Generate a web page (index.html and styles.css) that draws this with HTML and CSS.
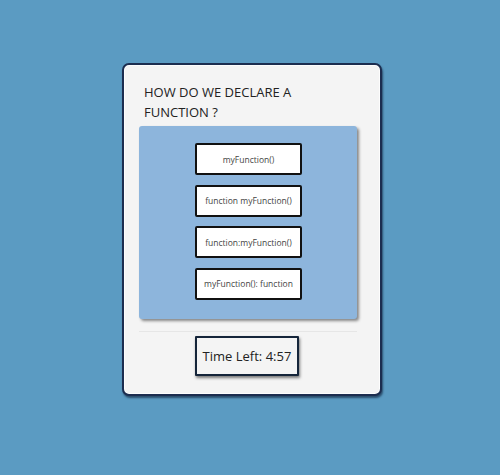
FILE: index.html
```html
<!DOCTYPE html>
<html>
<head>
<meta charset="utf-8">
<link rel="stylesheet" href="styles.css">
</head>
<body>
<div class="quiz">
  <h2 class="question">HOW DO WE DECLARE A FUNCTION ?</h2>
  <div class="answers">
    <button class="answer">myFunction()</button>
    <button class="answer">function myFunction()</button>
    <button class="answer">function:myFunction()</button>
    <button class="answer">myFunction(): function</button>
  </div>
  <hr class="divider">
  <div class="timer">Time Left: 4:57</div>
</div>
</body>
</html>
```
FILE: styles.css
```css
html, body {
  margin: 0;
  height: 100%;
}
body {
  background: #5b9bc2;
  font-family: "Open Sans", "Noto Sans", sans-serif;
  padding-top: 63px;
  box-sizing: border-box;
}
.quiz {
  width: 260px;
  height: 333px;
  box-sizing: border-box;
  margin-left: 122px;
  background: #f4f4f4;
  border: 2px solid #1c2d4f;
  border-radius: 7px;
  box-shadow: inset 0 0 0 1px #fdfdfd, 1px 2px 2px rgba(10, 25, 50, 0.6);
  padding: 17px 23px 0 15px;
  display: flex;
  flex-direction: column;
  align-items: stretch;
}
.question {
  margin: 0 0 4px 5px;
  font-size: 13px;
  line-height: 20px;
  font-weight: 400;
  color: #222;
  width: 190px;
}
.answers {
  background: #8db5dc;
  border-radius: 3px;
  box-shadow: 2px 2px 3px rgba(0, 0, 0, 0.45);
  padding: 17px 0 19px;
  display: flex;
  flex-direction: column;
  align-items: center;
  gap: 9.5px;
}
.answer {
  width: 107px;
  height: 32px;
  box-sizing: border-box;
  margin-left: 1px;
  background: #fff;
  border: 2px solid #111;
  border-radius: 2px;
  font-family: "Open Sans", "Noto Sans", sans-serif;
  font-size: 8.5px;
  color: #444;
  padding: 0;
  cursor: pointer;
}
.divider {
  border: 0;
  border-top: 1px solid #e6e6e6;
  margin: 12px 0 4px;
  width: 100%;
}
.timer {
  align-self: center;
  width: 104px;
  height: 40px;
  box-sizing: border-box;
  margin-right: 2px;
  border: 2px solid #15253a;
  border-radius: 1px;
  background: #f4f4f4;
  box-shadow: 1px 2px 3px rgba(0, 0, 0, 0.5);
  display: flex;
  align-items: center;
  justify-content: center;
  font-size: 13px;
  color: #222;
}
```
